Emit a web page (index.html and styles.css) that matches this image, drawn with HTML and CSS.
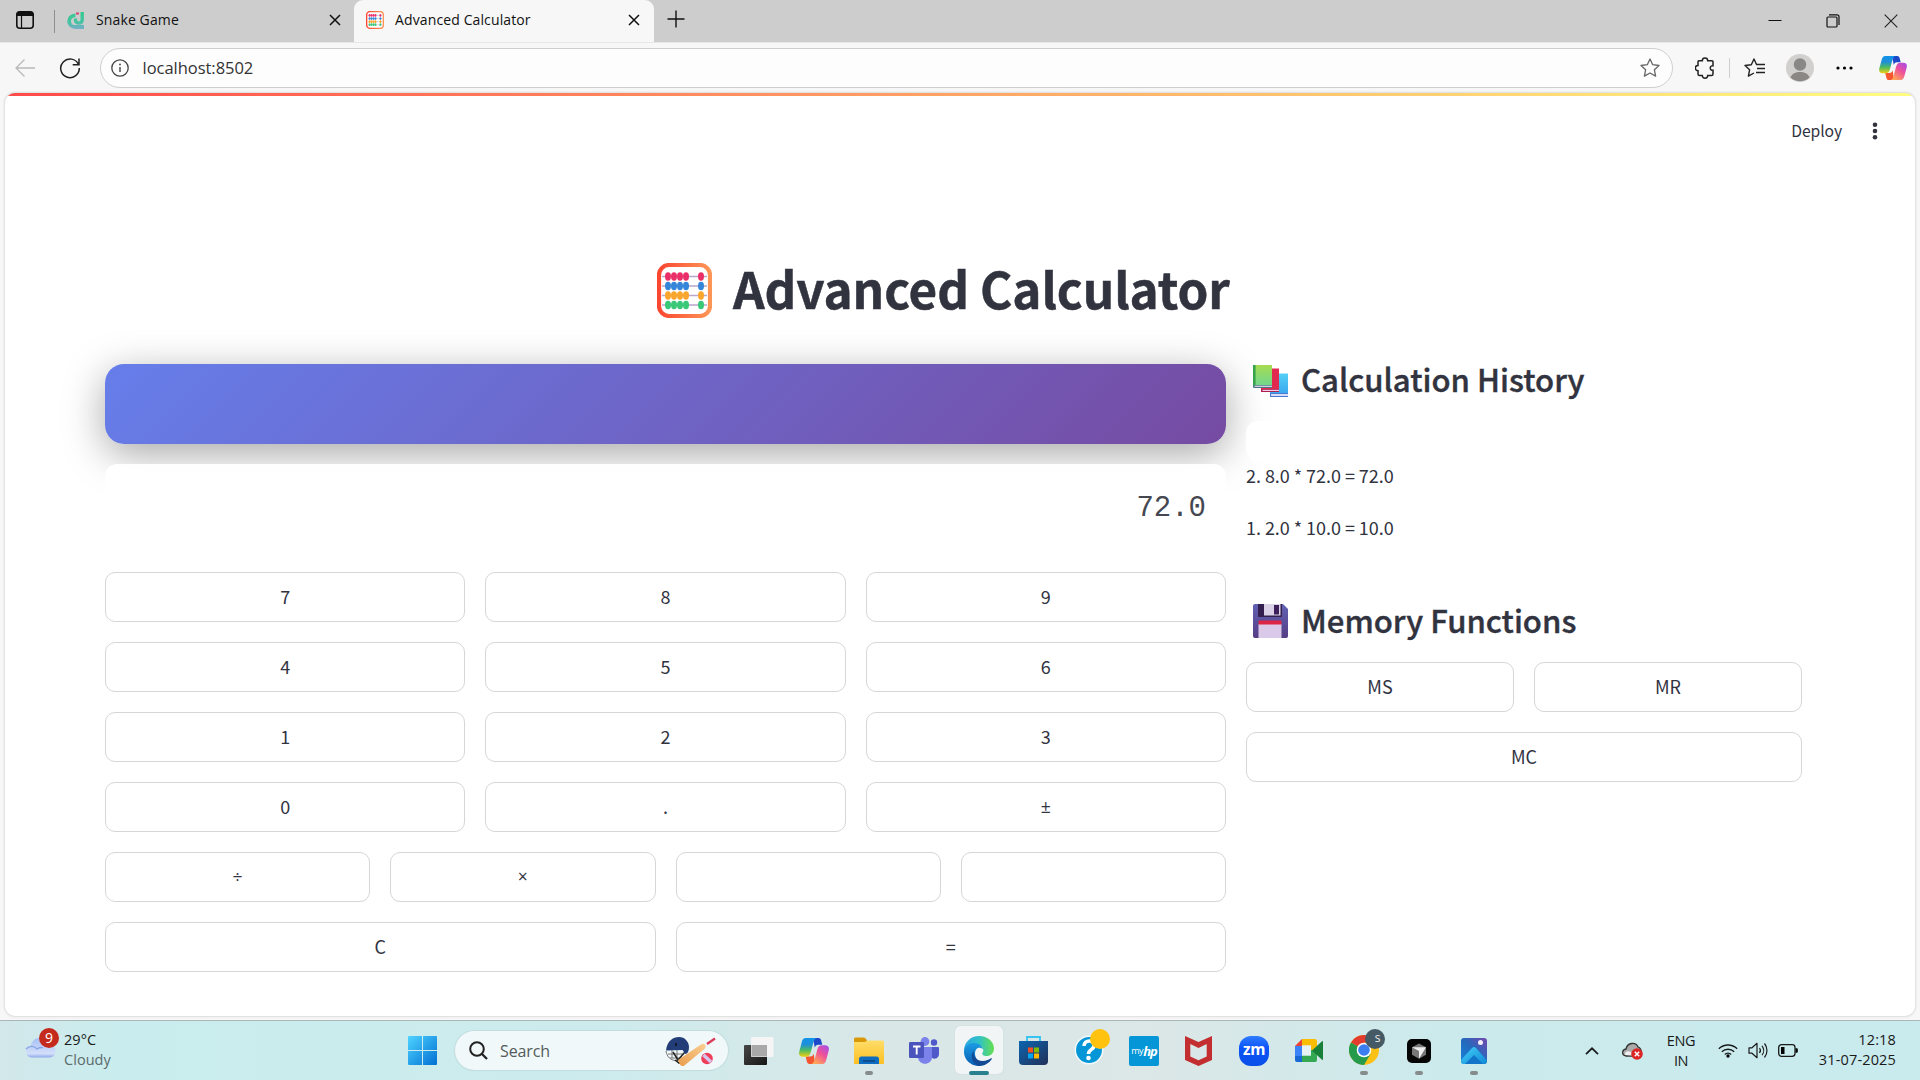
FILE: index.html
```html
<!DOCTYPE html>
<html lang="en">
<head>
<meta charset="utf-8">
<title>Advanced Calculator</title>
<link rel="stylesheet" href="styles.css">
</head>
<body>
<svg class="defs" width="0" height="0">
  <defs>
    <linearGradient id="frame"><stop offset="0" stop-color="#fb4630"/><stop offset="1" stop-color="#fd9556"/></linearGradient>
    <linearGradient id="cpA" x1="0" y1="0" x2="0" y2="1"><stop offset="0" stop-color="#0f93ea"/><stop offset=".35" stop-color="#1f8fd8"/><stop offset=".65" stop-color="#4cbb62"/><stop offset="1" stop-color="#f0cf13"/></linearGradient>
    <linearGradient id="cpB" x1="1" y1="0" x2=".3" y2="1"><stop offset="0" stop-color="#a14bf0"/><stop offset=".5" stop-color="#ee5199"/><stop offset="1" stop-color="#ffa758"/></linearGradient>
    <linearGradient id="win" x1="0" y1="0" x2="1" y2="1"><stop offset="0" stop-color="#4fd4ff"/><stop offset="1" stop-color="#006fd3"/></linearGradient>
    <linearGradient id="fold" x1="0" y1="0" x2="0" y2="1"><stop offset="0" stop-color="#ffdd68"/><stop offset="1" stop-color="#fcbf25"/></linearGradient>
    <linearGradient id="edgeA"><stop offset="0" stop-color="#2fa5e4"/><stop offset=".5" stop-color="#2fc1c8"/><stop offset="1" stop-color="#66e04f"/></linearGradient>
    <linearGradient id="edgeB" x1="0" y1="0" x2="0" y2="1"><stop offset="0" stop-color="#1b9de2"/><stop offset="1" stop-color="#0a5cb4"/></linearGradient>
    <linearGradient id="store" x1="0" y1="0" x2="1" y2="1"><stop offset="0" stop-color="#0b65b0"/><stop offset="1" stop-color="#223058"/></linearGradient>
    <linearGradient id="cloud" x1="0" y1="0" x2="0" y2="1"><stop offset="0" stop-color="#a6c0f4"/><stop offset=".8" stop-color="#d3defa"/><stop offset="1" stop-color="#8ea9eb"/></linearGradient>
    <linearGradient id="photo" x1="0" y1="1" x2="1" y2="0"><stop offset="0" stop-color="#1686dc"/><stop offset=".5" stop-color="#2369bd"/><stop offset="1" stop-color="#7548ae"/></linearGradient>
    <linearGradient id="hill" x1="0" y1="0" x2="1" y2="1"><stop offset="0" stop-color="#44cff8"/><stop offset="1" stop-color="#0f88d6"/></linearGradient>
    <linearGradient id="dark" x1="0" y1="0" x2="1" y2="1"><stop offset="0" stop-color="#474747"/><stop offset="1" stop-color="#161616"/></linearGradient>
    <linearGradient id="bookG" x1="0" y1="0" x2="0" y2="1"><stop offset="0" stop-color="#a5dc52"/><stop offset="1" stop-color="#72d68d"/></linearGradient>
    <linearGradient id="bookB" x1="0" y1="0" x2="0" y2="1"><stop offset="0" stop-color="#55d0f7"/><stop offset="1" stop-color="#3ca9ee"/></linearGradient>
    <linearGradient id="disk" x1="0" y1="0" x2="0" y2="1"><stop offset="0" stop-color="#6162b4"/><stop offset="1" stop-color="#553d85"/></linearGradient>
    <linearGradient id="snake" gradientUnits="userSpaceOnUse" x1="0" y1="0" x2="0" y2="18"><stop offset="0" stop-color="#35c98c"/><stop offset=".6" stop-color="#45c4a2"/><stop offset="1" stop-color="#78adc9"/></linearGradient>
    <linearGradient id="bat" x1="0" y1="1" x2="1" y2="0"><stop offset="0" stop-color="#e99c4c"/><stop offset="1" stop-color="#fbcf92"/></linearGradient>
    <symbol id="abacus" viewBox="0 0 55 55">
      <rect x="2" y="2" width="51" height="51" rx="10" fill="#fff" stroke="url(#frame)" stroke-width="4.2"/>
      <path d="M5 13.500h45M5 23h45M5 32.500h45M5 42h45" stroke="#b9a6c9" stroke-width="1.600"/>
      <g fill="#ea2f68"><ellipse cx="11" cy="13.500" rx="3" ry="4.200"/><ellipse cx="17" cy="13.500" rx="3" ry="4.200"/><ellipse cx="23" cy="13.500" rx="3" ry="4.200"/><ellipse cx="29" cy="13.500" rx="3" ry="4.200"/><ellipse cx="44" cy="13.500" rx="3" ry="4.200"/></g>
      <g fill="#3586d8"><ellipse cx="11" cy="23" rx="3" ry="4.200"/><ellipse cx="17" cy="23" rx="3" ry="4.200"/><ellipse cx="23" cy="23" rx="3" ry="4.200"/><ellipse cx="29" cy="23" rx="3" ry="4.200"/><ellipse cx="44" cy="23" rx="3" ry="4.200"/></g>
      <g fill="#faa52b"><ellipse cx="11" cy="32.500" rx="3" ry="4.200"/><ellipse cx="17" cy="32.500" rx="3" ry="4.200"/><ellipse cx="23" cy="32.500" rx="3" ry="4.200"/><ellipse cx="29" cy="32.500" rx="3" ry="4.200"/><ellipse cx="44" cy="32.500" rx="3" ry="4.200"/></g>
      <g fill="#38c877"><ellipse cx="11" cy="42" rx="3" ry="4.200"/><ellipse cx="17" cy="42" rx="3" ry="4.200"/><ellipse cx="23" cy="42" rx="3" ry="4.200"/><ellipse cx="29" cy="42" rx="3" ry="4.200"/><ellipse cx="44" cy="42" rx="3" ry="4.200"/></g>
    </symbol>
    <symbol id="copilot" viewBox="0 0 30 28">
      <path d="M14 1h5.500c1.600 0 2.200 1 2.600 2.200l1.200 4.600h-4c-2 0-3 1.200-3.500 3z" fill="#1d49c9"/>
      <path d="M16 27h-5.500c-1.600 0-2.200-1-2.600-2.200L6.700 19.500h4.500c2 0 3-1.200 3.500-3z" fill="#f4562f"/>
      <path d="M6.800 1h10.700c-1.700.6-2.500 2.200-3.100 4.400L11.800 15c-.9 3.300-2 4.700-5 4.700H4c-3.200 0-4.600-2-3.700-5.300L2.800 5C3.500 2.500 4.500 1 6.800 1z" fill="url(#cpA)"/>
      <path d="M23.200 27H12.500c1.700-.6 2.500-2.200 3.100-4.400L18.200 13c.9-3.300 2-4.700 5-4.700H26c3.200 0 4.600 2 3.700 5.300L27.200 23c-.7 2.500-1.700 4-4 4z" fill="url(#cpB)"/>
    </symbol>
  </defs>
</svg>

<header class="tabbar">
  <div class="tab-tools">
    <svg width="20" height="20" viewBox="0 0 20 20"><rect x="1.800" y="1.800" width="16.400" height="16.400" rx="3" fill="none" stroke="#111" stroke-width="1.600"/><path d="M1.500 6V4.500a3 3 0 0 1 3-3h11a3 3 0 0 1 3 3V6z" fill="#111"/><path d="M6.500 6v12" stroke="#111" stroke-width="1.200"/></svg>
  </div>
  <div class="tab tab-idle">
    <svg width="18" height="18" viewBox="0 0 18 18"><path d="M8.500 4.300C-.2 4.500.2 16 8.500 16H17" fill="none" stroke="url(#snake)" stroke-width="3.800"/><path d="M15.200 1v7.500c0 5-6.700 4.500-6.700.8V7.500" fill="none" stroke="url(#snake)" stroke-width="3.400"/><path d="M9 1.500h3v2H9z" fill="#d84073"/></svg>
    <span class="tab-name">Snake Game</span>
    <svg width="12" height="12" viewBox="0 0 12 12"><path d="M1 1l10 10M11 1L1 11" stroke="#111" stroke-width="1.500"/></svg>
  </div>
  <div class="tab tab-active">
    <svg width="18" height="18"><use href="#abacus"/></svg>
    <span class="tab-name">Advanced Calculator</span>
    <svg width="12" height="12" viewBox="0 0 12 12"><path d="M1 1l10 10M11 1L1 11" stroke="#111" stroke-width="1.500"/></svg>
  </div>
  <svg class="tab-new" width="18" height="18" viewBox="0 0 18 18"><path d="M9 .5v17M.5 9h17" stroke="#111" stroke-width="1.400"/></svg>
  <div class="window-buttons">
    <svg width="14" height="14" viewBox="0 0 14 14"><path d="M.5 6.500h13" stroke="#111"/></svg>
    <svg width="14" height="14" viewBox="0 0 14 14"><rect x="1" y="3" width="10" height="10" rx="1" fill="none" stroke="#111" stroke-width="1.200"/><path d="M3 .9h8a2 2 0 0 1 2 2V11" fill="none" stroke="#111" stroke-width="1.200"/></svg>
    <svg width="14" height="14" viewBox="0 0 14 14"><path d="M.7.7l12.600 12.600M13.300.7L.7 13.300" stroke="#222" stroke-width="1.100"/></svg>
  </div>
</header>

<nav class="toolbar">
  <svg width="20" height="20" viewBox="0 0 20 20"><path d="M20 10H1M9.500 1.500L1 10l8.500 8.500" fill="none" stroke="#b9b9b9" stroke-width="1.300"/></svg>
  <svg class="reload" width="22" height="22" viewBox="0 0 22 22"><path d="M19.500 7.500A9.300 9.300 0 1 0 20.300 11M20 1.500v6.300h-6.300" fill="none" stroke="#222" stroke-width="1.500"/></svg>
  <div class="address">
    <svg width="18" height="18" viewBox="0 0 18 18"><circle cx="9" cy="9" r="8.200" fill="none" stroke="#444" stroke-width="1.300"/><path d="M9 8v5" stroke="#444" stroke-width="1.400"/><circle cx="9" cy="5.500" r=".9" fill="#444"/></svg>
    <span class="url">localhost:8502</span>
    <svg width="20" height="20" viewBox="0 0 20 20"><path d="M10 1l2.700 5.700 6.300.8-4.600 4.300 1.200 6.300-5.600-3.100-5.600 3.100 1.200-6.300L1 7.500l6.300-.8z" fill="none" stroke="#666" stroke-width="1.300" stroke-linejoin="round"/></svg>
  </div>
  <svg class="ext" width="20" height="22" viewBox="0 0 20 22"><path d="M4 3.800h3.300a2.700 2.700 0 0 1 5.400 0H17a1 1 0 0 1 1 1v4a2.300 2.300 0 1 0 0 4.500V17a1.500 1.500 0 0 1-1.500 1.500h-3.800a2.700 2.700 0 0 1-5.400 0H4.500A1.500 1.500 0 0 1 3 17v-3.200a2.700 2.700 0 0 1 0-5.400V5a1.200 1.200 0 0 1 1-1.200z" fill="none" stroke="#222" stroke-width="1.500"/></svg>
  <span class="divider"></span>
  <svg class="favs" width="21" height="20" viewBox="0 0 21 20"><path d="M12.500 6.500L10 1 7.300 6.700 1 7.500l4.600 4.300-1.200 6.300L10 15" fill="none" stroke="#222" stroke-width="1.400" stroke-linejoin="round"/><path d="M12 6.500h9M13 10.500h8M12 14.500h9" stroke="#222" stroke-width="1.400"/></svg>
  <svg class="avatar" width="28" height="28" viewBox="0 0 28 28"><circle cx="14" cy="14" r="14" fill="#d2d0ce"/><circle cx="14" cy="10.500" r="6.200" fill="#8a8785"/><path d="M4.500 23.500c1.500-3.800 5-5.500 9.500-5.500s8 1.700 9.500 5.500a14 14 0 0 1-19 0z" fill="#8a8785"/></svg>
  <svg class="more" width="17" height="4" viewBox="0 0 17 4"><circle cx="2" cy="2" r="1.600"/><circle cx="8.500" cy="2" r="1.600"/><circle cx="15" cy="2" r="1.600"/></svg>
  <svg width="28" height="26"><use href="#copilot"/></svg>
</nav>

<div class="viewport">
  <main class="page">
    <div class="app-header">
      <span>Deploy</span>
      <svg width="6" height="18" viewBox="0 0 6 18"><circle cx="3" cy="2.700" r="2.300"/><circle cx="3" cy="9" r="2.300"/><circle cx="3" cy="15.300" r="2.300"/></svg>
    </div>
    <h1 class="title"><svg width="55" height="55"><use href="#abacus"/></svg><span>Advanced Calculator</span></h1>
    <div class="columns">
      <section class="calculator">
        <div class="banner"></div>
        <div class="display">72.0</div>
        <div class="keys">
          <div class="row"><button class="key">7</button><button class="key">8</button><button class="key">9</button></div>
          <div class="row"><button class="key">4</button><button class="key">5</button><button class="key">6</button></div>
          <div class="row"><button class="key">1</button><button class="key">2</button><button class="key">3</button></div>
          <div class="row"><button class="key">0</button><button class="key">.</button><button class="key sign">±</button></div>
          <div class="row"><button class="key sign">÷</button><button class="key sign">×</button><button class="key"></button><button class="key"></button></div>
          <div class="row"><button class="key">C</button><button class="key">=</button></div>
        </div>
      </section>
      <aside class="side">
        <h2 class="heading">
          <svg width="35" height="32" viewBox="0 0 35 32"><path d="M17 8.500h18V28H17z" fill="url(#bookB)"/><path d="M17 28h18v1.500H18.500v1.200H35V32H17z" fill="#4c78d4"/><path d="M18 29h17v1.700H18z" fill="#d6defa"/><path d="M8 3.500h18V24H8z" fill="#e1294f"/><path d="M8 24h18v3H8z" fill="#b11d50"/><path d="M9.500 24.800H26V26H9.500z" fill="#e9cfe5"/><path d="M0 0h19v20.500H0z" fill="url(#bookG)"/><path d="M0 0h2.600v20.500H0z" fill="#38a34c"/><path d="M0 20h19v3H1.200A1.200 1.200 0 0 1 0 21.800z" fill="#46777e"/><path d="M1.500 20.700H19v1.200H1.500z" fill="#e5d5ee"/></svg>
          <span>Calculation History</span>
        </h2>
        <div class="history-box"></div>
        <p class="entry">2. 8.0 * 72.0 = 72.0</p>
        <p class="entry">1. 2.0 * 10.0 = 10.0</p>
        <h2 class="heading heading-memory">
          <svg width="35" height="34" viewBox="0 0 35 34"><path d="M2 0h28l5 5v27a2 2 0 0 1-2 2H2a2 2 0 0 1-2-2V2a2 2 0 0 1 2-2z" fill="url(#disk)"/><path d="M5 0h24v12a1 1 0 0 1-1 1H6a1 1 0 0 1-1-1z" fill="#33204f"/><path d="M11 0h16.500v11.500H11z" fill="#dcd2e8"/><path d="M21 1h5v9.500h-5z" fill="#3d2059"/><path d="M5.500 20h23v14h-23z" fill="#dac9e8"/><path d="M6.500 16.500h21a1 1 0 0 1 1 1v3h-23v-3a1 1 0 0 1 1-1z" fill="#dd2546"/></svg>
          <span>Memory Functions</span>
        </h2>
        <div class="keys">
          <div class="row"><button class="key">MS</button><button class="key">MR</button></div>
          <div class="row"><button class="key">MC</button></div>
        </div>
      </aside>
    </div>
  </main>
</div>

<footer class="taskbar">
  <div class="weather">
    <div class="weather-icon">
      <svg width="31" height="21" viewBox="0 0 31 21"><path d="M6 20.500a5.800 5.800 0 0 1-.5-11.300C7 3.500 10.500.8 15 .8s8 3 9 7.200c4 .3 6.500 2.800 6.500 6.300s-2.500 6.200-6 6.200z" fill="url(#cloud)"/><path d="M1 12c3-3.500 8-3.500 11 0 2-1.500 4-2 6-1" fill="none" stroke="#86a3e8" stroke-width="1.300"/></svg>
      <span class="badge">9</span>
    </div>
    <div class="weather-text"><div>29°C</div><div class="muted">Cloudy</div></div>
  </div>
  <div class="start"><svg width="29" height="29" viewBox="0 0 29 29"><path d="M1 0h13v14H0V1a1 1 0 0 1 1-1zM15 0h13a1 1 0 0 1 1 1v13H15zM0 15h14v14H1a1 1 0 0 1-1-1zM15 15h14v13a1 1 0 0 1-1 1H15z" fill="url(#win)"/></svg></div>
  <div class="search">
    <svg width="19" height="19" viewBox="0 0 19 19"><circle cx="8" cy="8" r="6.800" fill="none" stroke="#222" stroke-width="2"/><path d="M13 13l5 5" stroke="#222" stroke-width="2.300"/></svg>
    <span>Search</span>
    <svg width="51" height="30" viewBox="0 0 51 30"><path d="M1 15c1 8 8 11 14 9M3 18h16M5 22h14M7 14v8M12 14v11" stroke="#777" fill="none"/><path d="M8 16l5 8 7-8M10 24l4 3 6-3" stroke="#222" stroke-width="1.500" fill="none"/><path d="M1 14.500C2 5 8 1 14 1s10 5 10 10c0 4-1.500 7-3.500 7l-3-4z" fill="#223d78"/><path d="M11 7v3" stroke="#111" stroke-width="1.500"/><path d="M13 24L36 8.500c3-2 6 1 4 4L20 29c-2 2-4 1-5-.5z" fill="url(#bat)"/><path d="M42 8l8-5.500" stroke="#d93c58" stroke-width="2.400"/><circle cx="42" cy="22.500" r="5.800" fill="#ef3c58"/><path d="M38.500 19l7.500 7" stroke="#d7c5f0" stroke-width="3.500"/></svg>
  </div>
  <div class="apps">
    <div class="app"><svg width="30" height="28" viewBox="0 0 30 28"><rect y="8" width="23" height="20" rx="1" fill="url(#dark)"/><rect x="7" width="22.500" height="20" rx="1" fill="#f5f5f5"/><path d="M7.500 8H23v11.500H7.500z" fill="#a9a9a9"/></svg></div>
    <div class="app"><svg width="30" height="28"><use href="#copilot"/></svg></div>
    <div class="app running"><svg width="30" height="27" viewBox="0 0 30 27"><path d="M0 7V2a1.500 1.500 0 0 1 1.500-1.500h8c1.500 0 2.500 1.200 3.500 3V7z" fill="#d99808"/><path d="M0 5h11l2-1.500h15.500A1.500 1.500 0 0 1 30 5v21a1 1 0 0 1-1 1H0z" fill="url(#fold)"/><path d="M5 27v-5a2.500 2.500 0 0 1 2.500-2.500h15A2.500 2.500 0 0 1 25 22v5z" fill="#0f6dc0"/><path d="M9 24h12" stroke="#0c4583" stroke-width="1.500"/></svg></div>
    <div class="app"><svg width="30" height="27" viewBox="0 0 30 27"><circle cx="16" cy="4.500" r="4.400" fill="#7b83eb"/><circle cx="25" cy="5.500" r="3.200" fill="#5059c9"/><path d="M20 10h9a1 1 0 0 1 1 1v6c0 5-6 6-8 3z" fill="#5059c9"/><path d="M9 10h14v10c0 9-14 9-14 0z" fill="#7b83eb"/><rect y="5" width="15" height="16" rx="1.200" fill="#4b53bc"/><path d="M4 9.500h7.500M7.700 9.500v8" stroke="#fff" stroke-width="1.900"/></svg></div>
    <div class="app selected"><svg width="30" height="30" viewBox="0 0 30 30"><path d="M0 15C0 6 7 0 15 0c9 0 15 6 15 12.500 0 5-3.500 7.500-7.500 7.500-3 0-5-1.500-4-3 2.500-4-1-8-6-8C6.500 9 2 11.500 0 15z" fill="url(#edgeA)"/><path d="M0 15.500C.5 9.500 5.500 7 10 7c5.500 0 8.500 3.500 8.800 6.500C17 10.500 11 11 11 17.500c0 6 5 9.500 9 10.500-2 1.500-4 2-6 2C6 29.500-.3 23 0 15.500z" fill="url(#edgeB)"/><path d="M10 14.500c-1.500 6 3 10.500 8.500 10.500 4 0 6.500-1.500 8.500-2.700.8-.4 1.200.2.800.8C25 27.500 20.500 30 15 30 8 28 5.500 19 10 14.500z" fill="#134a95"/></svg></div>
    <div class="app store"><svg width="29" height="29" viewBox="0 0 29 29"><path d="M8 6V1h13v5" fill="none" stroke="#35c3f2" stroke-width="1.800"/><path d="M0 5h29v20a4 4 0 0 1-4 4H4a4 4 0 0 1-4-4z" fill="url(#store)"/><path d="M9 11.500h5v5H9z" fill="#f25022"/><path d="M15 11.500h5v5h-5z" fill="#7fba00"/><path d="M9 17.500h5v5H9z" fill="#00a4ef"/><path d="M15 17.500h5v5h-5z" fill="#ffb900"/></svg></div>
    <div class="app help"><svg width="36" height="36" viewBox="0 0 36 36"><circle cx="15" cy="21" r="13.700" fill="#0496d6" stroke="#f4fafc" stroke-width="1.500"/><path d="M10 17c.3-7 10.500-6.500 10 0-.3 3.500-5.500 3.500-5.500 8" fill="none" stroke="#fff" stroke-width="3.600"/><circle cx="14.500" cy="29" r="2.300" fill="#fff"/><circle cx="26" cy="10" r="10" fill="#ffc20e"/></svg></div>
    <div class="app"><div class="hp"><span>my</span><b>hp</b></div></div>
    <div class="app mcafee"><svg width="27" height="30" viewBox="0 0 27 30"><path d="M0 0l13.500 6L27 0v24l-13.500 6L0 24zM5.300 8v12.500l8.200 3.700 8.200-3.700V8l-8.200 4z" fill="#c32f31" fill-rule="evenodd"/></svg></div>
    <div class="app"><div class="zm">zm</div></div>
    <div class="app"><svg width="28" height="23" viewBox="0 0 28 23"><path d="M0 7l7-7v7z" fill="#ea4335"/><path d="M0 7h7v10H0z" fill="#3c82f7"/><path d="M0 17h7v6H2a2 2 0 0 1-2-2z" fill="#1967d2"/><path d="M7 0h13a2 2 0 0 1 2 2v9h-6V6.500H7z" fill="#fbbc04"/><path d="M7 16.500h9V11h6v10a2 2 0 0 1-2 2H7z" fill="#34a853"/><path d="M17 11.500L27 2.300c.6-.5 1-.2 1 .5v17.400c0 .7-.4 1-1 .5z" fill="#188038"/><path d="M7 6.500h9v10H7z" fill="#e8f2f4"/></svg></div>
    <div class="app running chrome"><svg width="36" height="36" viewBox="0 0 36 36"><circle cx="15" cy="21" r="15" fill="#fbc116"/><path d="M15 21L2 13.500A15 15 0 0 1 28 13.500H15z" fill="#e33b2e"/><path d="M15 21l6.500 4L15 36A15 15 0 0 1 2 13.500z" fill="#269b4b"/><circle cx="15" cy="21" r="7.300" fill="#fff"/><circle cx="15" cy="21" r="5.800" fill="#3a7df0"/><circle cx="26" cy="10" r="10" fill="#455a64"/></svg><span class="profile">s</span></div>
    <div class="app running"><svg width="24" height="24" viewBox="0 0 24 24"><rect width="24" height="24" rx="5" fill="#050505"/><path d="M12 4.500l7 3.800v7.400l-7 4-7-4V8.300z" fill="#777"/><path d="M5 8.300h14l-7 11.400V12z" fill="#eee"/></svg></div>
    <div class="app running"><svg width="26" height="26" viewBox="0 0 26 26"><rect width="26" height="26" rx="3" fill="url(#photo)"/><path d="M0 22L11 10c1.300-1.300 2.700-1.300 4 0l11 12.500c0 2-1 3.500-3 3.500H3c-2 0-3-1.500-3-3z" fill="url(#hill)"/><path d="M4 26l9-9 9 9z" fill="#1275ca"/><circle cx="19.500" cy="4.500" r="2.500" fill="#f5eefa"/></svg></div>
  </div>
  <div class="tray">
    <svg width="14" height="8" viewBox="0 0 14 8"><path d="M1 7.200L7 1.300l6 5.900" fill="none" stroke="#1a1a1a" stroke-width="1.700"/></svg>
    <svg class="onedrive" width="21" height="18" viewBox="0 0 21 18"><path d="M4 14C-1 13 0 7.500 4 7 5.500 0 14 0 16 5c3 1 4 4 3 9z" fill="#aaa" stroke="#333" stroke-width="1.300"/><path d="M3 13c-1-3 3-5 6-3l7 4z" fill="#eee"/><circle cx="15" cy="12" r="5.800" fill="#dc2626"/><path d="M12.800 9.800l4.400 4.400M17.200 9.800l-4.400 4.400" stroke="#fff" stroke-width="1.400"/></svg>
    <div class="lang">ENG<br>IN</div>
    <svg class="wifi" width="20" height="15" viewBox="0 0 20 15"><path d="M.8 5.800a13 13 0 0 1 18.400 0M3.800 8.800a8.800 8.800 0 0 1 12.400 0M6.800 11.500a4.500 4.500 0 0 1 6.400 0" fill="none" stroke="#1a1a1a" stroke-width="1.300"/><circle cx="10" cy="13" r="1.700"/></svg>
    <svg class="sound" width="20" height="17" viewBox="0 0 20 17"><path d="M1 5.800h3L9 1.300v14.400l-5-4.500H1z" fill="none" stroke="#1a1a1a" stroke-width="1.200" stroke-linejoin="round"/><path d="M11.500 6c1.200 1.500 1.200 3.500 0 5M14 3.800c2.200 2.700 2.200 6.700 0 9.400M16.500 1.500c3.300 4 3.300 10 0 14" fill="none" stroke="#1a1a1a" stroke-width="1.200"/></svg>
    <svg class="battery" width="20" height="13" viewBox="0 0 20 13"><rect x=".7" y=".7" width="16.300" height="11.600" rx="2.800" fill="none" stroke="#1a1a1a" stroke-width="1.300"/><path d="M3 3h3.500v7H3zM17.500 4.300h1.300a1 1 0 0 1 1 1v2.400a1 1 0 0 1-1 1h-1.300z"/></svg>
    <div class="clock">12:18<br>31-07-2025</div>
  </div>
</footer>
</body>
</html>
```
FILE: styles.css
```css
* { box-sizing: border-box; }
body {
  margin: 0; width: 1920px; height: 1080px; overflow: hidden;
  display: flex; flex-direction: column;
  background: #f7f7f7; color: #1a1a1a;
  font-family: "Open Sans", "Noto Sans", sans-serif;
}
svg { display: block; flex: none; }
.defs { position: absolute; }

/* Browser tabs */
.tabbar { height: 42px; flex: none; display: flex; background: #cdcdcd; }
.tab-tools { width: 55px; margin: 10px 0 9px; padding-left: 15px; border-right: 1px solid #8f8f8f; }
.tab { display: flex; align-items: center; padding: 0 13px 2px 12px; font-size: 14px; color: #111; letter-spacing: .12px; }
.tab-idle { width: 299px; }
.tab-active { width: 300px; padding-right: 14px; background: #f7f7f7; border-radius: 9px 9px 0 0; }
.tab-name { flex: 1; padding: 0 0 2px 11px; white-space: nowrap; }
.tab-new { margin: 10px 0 0 13px; }
.window-buttons { margin-left: auto; display: flex; gap: 44px; padding: 14px 22px 0 0; }

/* Address bar */
.toolbar { height: 51px; flex: none; display: flex; align-items: center; padding: 0 0 0 15px; border-top: 1px solid #e8e8e8; }
.reload { margin-left: 24px; }
.address { width: 1573px; height: 40px; margin-left: 19px; padding: 0 12px 0 10px; display: flex; align-items: center; border: 1px solid #cfcfcf; border-radius: 20px; background: #fdfdfd; }
.url { flex: 1; padding: 0 0 2px 13.500px; font-size: 16.500px; letter-spacing: -.03px; color: #333; }
.ext { margin-left: 22px; }
.divider { width: 1px; height: 20px; margin: 0 14px 0 14px; background: #cfcfcf; }
.avatar { margin-left: 21px; }
.more { margin: 0 26px 0 22px; }

/* Streamlit page */
.viewport { flex: 1; padding: 0 5px 4px; min-height: 0; }
.page {
  height: 100%; overflow: hidden; border-radius: 10px; color: #31333f;
  background: linear-gradient(90deg, #ff4b4b, #fffd80) top / 100% 3px no-repeat #fff;
  box-shadow: 0 0 2px 1px #dcdcdc;
  font-family: "Noto Sans CJK SC", "Source Sans Pro", sans-serif;
}
.app-header { height: 76px; display: flex; justify-content: flex-end; align-items: center; gap: 30px; padding-right: 37px; font-size: 15.700px; }
.app-header span { padding-bottom: 2px; letter-spacing: -.1px; }
.app-header svg { fill: #31333f; }
.title { height: 80px; margin: 81px 0 34px; padding-left: 652px; display: flex; align-items: center; gap: 21px; font-size: 49.400px; font-weight: 700; line-height: 60px; letter-spacing: -.1px; -webkit-text-stroke: .5px; }
.title span { padding-bottom: 4px; }
.columns { display: flex; gap: 20px; padding-left: 100px; }
.calculator { width: 1121px; }
.banner { height: 80px; border-radius: 19px; background: linear-gradient(135deg, #667eea, #764ba2); box-shadow: 0 10px 40px rgba(0, 0, 0, .35); }
.display {
  position: relative; height: 88px; margin: 20px 0; padding: 25px 20px; border-radius: 12px;
  background: rgba(255, 255, 255, .95); color: #454751;
  text-align: right; font: 29px/40px "Liberation Mono", monospace;
}
.keys, .row { display: flex; gap: 20px; }
.keys { flex-direction: column; }
.key { flex: 1; height: 50px; padding: 0 0 3px; border: 1px solid #d6d6d9; border-radius: 10px; background: #fff; color: #31333f; font: 18px/26px "Noto Sans CJK SC", sans-serif; }
.sign { font: 17.500px/26px "Open Sans", sans-serif; }
.side { width: 556px; position: relative; }
.heading { margin: -1px 0 0; height: 36px; padding-left: 7px; display: flex; align-items: center; gap: 13px; font-size: 31.100px; line-height: 36px; font-weight: 500; white-space: nowrap; -webkit-text-stroke: .4px; }
.heading span { padding-bottom: 4px; }
.history-box { height: 40px; margin: 22px 0 0; border-radius: 12px; background: rgba(255, 255, 255, .95); }
.entry { margin: -1px 0 23px; line-height: 30px; font-size: 18px; letter-spacing: -.04px; }
.heading-memory { margin: 61px 0 23px; }
.heading-memory span { padding-bottom: 2px; }

/* Taskbar */
.taskbar {
  height: 60px; flex: none; display: flex; align-items: center; border-top: 1px solid #a9b7b9;
  background: linear-gradient(90deg, #d2e7ea 0, #c9edee 120px, #cdebed 600px, #dae7e7 900px, #dce7e7 1150px, #cbeaec 1450px, #c9ebed 100%);
}
.weather { width: 383px; height: 100%; display: flex; gap: 8px; padding: 7px 0 0 25px; font-size: 14.500px; line-height: 20px; letter-spacing: .05px; }
.weather-icon { position: relative; padding-top: 9px; }
.weather-text { padding-top: 2px; }
.badge { position: absolute; left: 14px; top: 0; width: 20px; height: 20px; border-radius: 50%; background: #c42b1c; color: #fff; font-size: 14px; text-align: center; }
.muted { color: #5b6a6b; }
.start { width: 72px; padding-left: 25px; }
.search { width: 273px; height: 39px; padding: 0 12px 0 14px; display: flex; align-items: center; border-radius: 20px; background: #f0f8f9; box-shadow: 0 0 1px 1px #c2dcde; font-size: 16px; color: #545b5c; letter-spacing: -.1px; }
.search span { flex: 1; padding-left: 12px; }
.apps { display: flex; margin-left: 3.500px; }
.app { position: relative; width: 55px; height: 59px; display: flex; justify-content: center; align-items: center; }
.running::after, .selected::after { content: ""; position: absolute; bottom: 5px; left: 23px; width: 8px; height: 4px; border-radius: 2px; background: #868b8c; }
.selected::before { content: ""; position: absolute; z-index: 0; left: 3px; top: 5px; width: 48px; height: 48px; border-radius: 5px; background: #f1f5f5; box-shadow: 0 0 1px #aebcbc; }
.selected svg { position: relative; }
.selected::after { left: 17px; width: 20px; background: #29808f; }
.help, .chrome { align-items: flex-start; padding: 8px 0 0 6px; }
.store, .mcafee { padding-right: 2px; }
.profile { position: absolute; left: 36px; top: 8px; width: 10px; font-size: 12px; line-height: 18px; color: #e8ecee; text-align: center; }
.hp { width: 30px; height: 30px; display: flex; justify-content: center; align-items: center; border-radius: 2px; background: #0496d6; color: #fff; font-size: 9px; letter-spacing: -.4px; }
.hp b { font-size: 13px; font-style: italic; letter-spacing: -1px; }
.zm { width: 30px; height: 30px; border-radius: 12px; background: linear-gradient(#2f7cff, #0b54f8 40%, #0a4fe8); color: #fff; font: 700 15.500px/27px "Open Sans", sans-serif; text-align: center; letter-spacing: -.5px; }
.tray { margin-left: auto; display: flex; align-items: center; padding-right: 24px; font-size: 14.500px; line-height: 20px; letter-spacing: .15px; }
.onedrive { margin-left: 23px; }
.lang { width: 32px; margin-left: 22px; text-align: center; letter-spacing: -.4px; }
.wifi { margin-left: 21px; }
.sound { margin-left: 10px; }
.battery { margin-left: 10px; }
.clock { width: 98px; padding-bottom: 1px; text-align: right; }
```
